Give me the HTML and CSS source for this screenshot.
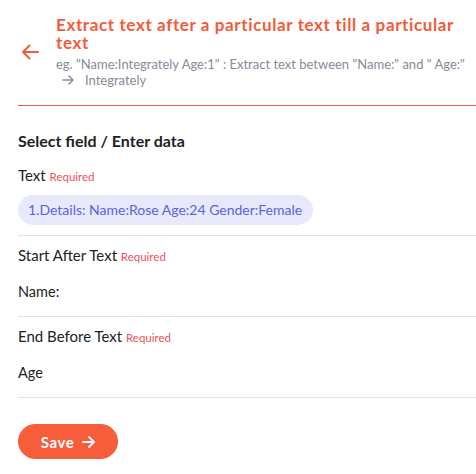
FILE: index.html
```html
<!DOCTYPE html>
<html>
<head>
<meta charset="utf-8">
<link rel="stylesheet" href="styles.css">
</head>
<body>
<div class="page">
  <header class="header">
    <button class="back" aria-label="Back">
      <svg width="18" height="16" viewBox="0 0 18 16"><path d="M17 8H2M8.5 1.5L2 8l6.5 6.5" fill="none" stroke="#f15b3b" stroke-width="2" stroke-linecap="round" stroke-linejoin="round"/></svg>
    </button>
    <div class="head-text">
      <h1 class="title">Extract text after a particular text till a particular text</h1>
      <p class="desc">eg. "Name:Integrately Age:1" : Extract text between "Name:" and " Age:"<br><span class="arrow-line"><svg class="small-arrow" width="12" height="10" viewBox="0 0 12 10"><path d="M1 5h10M7 1l4 4-4 4" fill="none" stroke="#8a8d9c" stroke-width="1.5" stroke-linecap="round" stroke-linejoin="round"/></svg>Integrately</span></p>
    </div>
  </header>
  <div class="rule"></div>
  <section class="form">
    <h2 class="section-title">Select field / Enter data</h2>
    <div class="field first">
      <div class="label">Text <span class="req">Required</span></div>
      <div class="value"><span class="chip">1.Details: Name:Rose Age:24 Gender:Female</span></div>
    </div>
    <div class="field">
      <div class="label">Start After Text <span class="req">Required</span></div>
      <div class="value plain">Name:</div>
    </div>
    <div class="field">
      <div class="label">End Before Text <span class="req">Required</span></div>
      <div class="value plain">Age</div>
    </div>
    <button class="save">Save
      <svg width="13" height="12" viewBox="0 0 13 12"><path d="M1 6h11M7 1l5 5-5 5" fill="none" stroke="#fff" stroke-width="1.8" stroke-linecap="round" stroke-linejoin="round"/></svg>
    </button>
  </section>
</div>
</body>
</html>
```
FILE: styles.css
```css
* { box-sizing: border-box; }
body {
  margin: 0;
  background: #fff;
  font-family: "Lato", "Open Sans", sans-serif;
  color: #222;
}
.page { padding: 0 0 0 18px; }
.header {
  display: flex;
  align-items: center;
  padding: 16px 0 17px 0;
}
.back {
  border: 0;
  background: none;
  padding: 0 0 0 3px;
  width: 38px;
  display: flex;
  justify-content: flex-start;
  cursor: pointer;
}
.head-text { flex: 1; }
.title {
  margin: 0;
  font-size: 17px;
  line-height: 18px;
  font-weight: 700;
  color: #f15b3b;
  letter-spacing: 0.62px;
}
.desc {
  margin: 4px 0 0 0;
  font-size: 13px;
  line-height: 16px;
  color: #878a9a;
}
.arrow-line { display: inline-flex; align-items: center; gap: 11px; padding-left: 6px; }
.rule { height: 1px; background: #f15b3b; }
.section-title {
  margin: 25px 0 0 0;
  font-size: 16px;
  line-height: 20px;
  font-weight: 700;
  color: #1e1e24;
}
.field {
  border-bottom: 1px solid #e2e2ea;
  padding: 0 0 10px 0;
}
.label {
  font-size: 15px;
  line-height: 18px;
  color: #222;
  padding-top: 10px;
}
.field.first .label { padding-top: 15px; }
.req { font-size: 11.5px; color: #f0505a; }
.value { padding-top: 9px; }
.chip {
  display: inline-block;
  background: #e8eafc;
  color: #5d5fe0;
  font-size: 14px;
  line-height: 30px;
  padding: 0 11px 0 10px;
  border-radius: 15px;
}
.plain {
  font-size: 14.5px;
  line-height: 18px;
  padding-top: 17px;
  padding-bottom: 5px;
  color: #1e1e24;
}
.save {
  margin-top: 26px;
  width: 100px;
  height: 35px;
  border: 0;
  border-radius: 18px;
  background: #f55d3b;
  color: #fff;
  font-family: inherit;
  font-weight: 700;
  font-size: 15px;
  letter-spacing: 0.6px;
  display: flex;
  align-items: center;
  justify-content: center;
  gap: 8px;
  cursor: pointer;
}
```
